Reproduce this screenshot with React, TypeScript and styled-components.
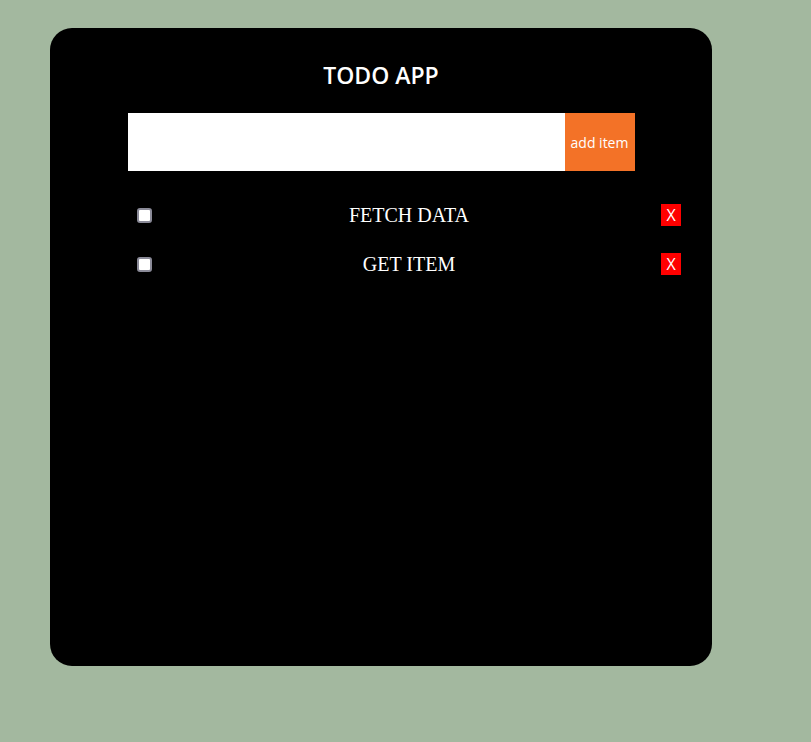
import styled, { createGlobalStyle } from "styled-components";

const GlobalStyle = createGlobalStyle`
  html, body {
    margin: 0;
    padding: 0;
    background: #a3b89f;
  }
  body {
    padding: 28px 50px;
  }
`;

type Todo = { id: number; text: string };

const todos: Todo[] = [
  { id: 1, text: "FETCH DATA" },
  { id: 2, text: "GET ITEM" },
];

function App() {
  return (
    <>
      <GlobalStyle />
      <Card>
        <Title>TODO APP</Title>
        <Form onSubmit={(e) => e.preventDefault()}>
          <Input type="text" />
          <AddButton type="submit">add item</AddButton>
        </Form>
        <List>
          {todos.map((t) => (
            <Row key={t.id}>
              <Check type="checkbox" />
              <ItemText>{t.text}</ItemText>
              <RemoveButton>X</RemoveButton>
            </Row>
          ))}
        </List>
      </Card>
    </>
  );
}
export default App;

export const Card = styled.div`
  box-sizing: border-box;
  width: 662px;
  height: 638px;
  background: #000;
  border-radius: 22px;
  padding-top: 31px;
  display: flex;
  flex-direction: column;
  align-items: center;
`;

export const Title = styled.h1`
  margin: 0;
  font-family: "Open Sans", "Noto Sans", sans-serif;
  font-size: 23px;
  font-weight: 600;
  line-height: 33px;
  color: #fff;
  text-align: center;
`;

export const Form = styled.form`
  display: flex;
  width: 507px;
  height: 58px;
  margin-top: 21px;
`;

export const Input = styled.input`
  flex: 1;
  border: none;
  outline: none;
  margin: 0;
  padding: 0 10px;
  background: #fff;
  font-family: "Open Sans", sans-serif;
  font-size: 16px;
`;

export const AddButton = styled.button`
  width: 70px;
  border: none;
  margin: 0;
  padding: 0;
  background: #f37227;
  color: #fff;
  font-family: "Open Sans", "Noto Sans", sans-serif;
  font-size: 14px;
  cursor: pointer;
`;

export const List = styled.ul`
  list-style: none;
  align-self: flex-start;
  margin: 24px 0 0 87px;
  padding: 0;
  width: 544px;
  display: flex;
  flex-direction: column;
  gap: 9px;
`;

export const Row = styled.li`
  display: grid;
  grid-template-columns: 1fr auto 1fr;
  align-items: center;
  height: 40px;
`;

export const Check = styled.input`
  justify-self: start;
  appearance: none;
  box-sizing: border-box;
  width: 15px;
  height: 15px;
  margin: 0;
  background: #fff;
  border: 2px solid #8a8a98;
  border-radius: 3px;
`;

export const ItemText = styled.span`
  font-family: "Liberation Serif", "Times New Roman", serif;
  font-size: 20px;
  color: #fff;
`;

export const RemoveButton = styled.button`
  justify-self: end;
  width: 20px;
  height: 22px;
  border: none;
  margin: 0;
  padding: 0;
  background: #ff0000;
  color: #fff;
  font-family: "Open Sans", "Noto Sans", sans-serif;
  font-size: 16px;
  line-height: 22px;
  cursor: pointer;
`;
